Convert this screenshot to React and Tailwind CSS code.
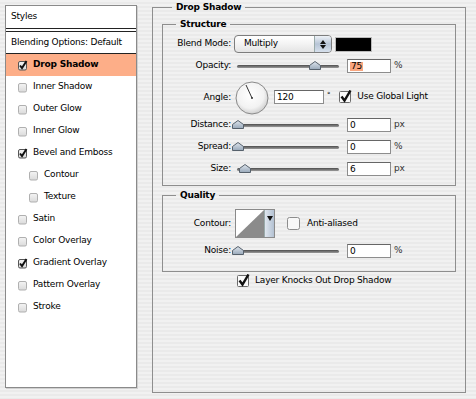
const stripes =
  'bg-[repeating-linear-gradient(180deg,#f1f1f1_0px,#f1f1f1_2px,#eaeaea_2px,#eaeaea_4px)]'

function SmallCheck({ checked }) {
  return (
    <svg width="11" height="11" viewBox="0 0 11 11" className="shrink-0">
      <defs>
        <linearGradient id="cbg" x1="0" y1="0" x2="0" y2="1">
          <stop offset="0" stopColor="#f4f4f4" />
          <stop offset="1" stopColor="#dadada" />
        </linearGradient>
      </defs>
      <rect x="1.5" y="1.5" width="8" height="8.5" rx="1.5" fill="url(#cbg)" stroke={checked ? '#555' : '#b0b0b0'} />
      {checked && <path d="M3 5.5 L5 8 L9.5 1" fill="none" stroke="#111" strokeWidth="2" />}
    </svg>
  )
}

function BigCheck({ checked }) {
  return (
    <svg width="14" height="14" viewBox="0 0 14 14" className="shrink-0">
      <rect x="0.5" y="1.5" width="11" height="11" rx="1" fill="#fafafa" stroke="#6b6b6b" />
      {checked && <path d="M2.5 6.5 L5.5 10.5 L11.5 0.5" fill="none" stroke="#111" strokeWidth="2.4" />}
    </svg>
  )
}

function StyleRow({ label, checked, bold, selected, indent }) {
  return (
    <div className={`h-[22px] flex items-center gap-[5px] ${indent ? 'pl-[22px]' : 'pl-[11px]'} ${selected ? 'bg-[#fdae88]' : ''}`}>
      <SmallCheck checked={checked} />
      <span className={bold ? 'font-bold' : ''}>{label}</span>
    </div>
  )
}

function Thumb() {
  return (
    <svg width="12" height="9" viewBox="0 0 12 9" className="absolute top-[-4px]">
      <defs>
        <linearGradient id="thg" x1="0" y1="0" x2="0" y2="1">
          <stop offset="0" stopColor="#dfe6ee" />
          <stop offset="1" stopColor="#98a8b9" />
        </linearGradient>
      </defs>
      <path d="M0.5 8.5 L0.5 4.5 L6 0.5 L11.5 4.5 L11.5 8.5 Z" fill="url(#thg)" stroke="#56616c" />
    </svg>
  )
}

function Slider({ pos }) {
  return (
    <div className="w-[108px] h-full flex items-center pl-[2px]">
      <div className="relative w-[102px] h-[3px] rounded-full bg-[linear-gradient(180deg,#4d4d4d,#9a9a9a)]">
        <div className="absolute" style={{ left: pos - 6 }}>
          <Thumb />
        </div>
      </div>
    </div>
  )
}

function Field({ value, w = 'w-[44px]', hl }) {
  return (
    <div className={`${w} h-[14px] bg-white border border-[#8d8d8d] border-t-[#666] flex items-center pl-[2px] leading-none`}>
      {hl ? <span className="bg-[#f9a67f] px-[1px]">{value}</span> : value}
    </div>
  )
}

function SliderRow({ label, pos, value, unit, mt, hl }) {
  return (
    <div className={`flex items-center h-[14px] ${mt}`}>
      <div className="w-[68px] text-right">{label}</div>
      <div className="ml-[4px] h-full">
        <Slider pos={pos} />
      </div>
      <div className="ml-[4px]">
        <Field value={value} hl={hl} />
      </div>
      <div className="ml-[3px] text-[#333]">{unit}</div>
    </div>
  )
}

function Dial() {
  return (
    <svg width="34" height="34" viewBox="0 0 34 34" className="shrink-0">
      <defs>
        <radialGradient id="dg" cx="0.45" cy="0.4" r="0.6">
          <stop offset="0" stopColor="#ffffff" />
          <stop offset="0.7" stopColor="#f2f2f2" />
          <stop offset="1" stopColor="#cfcfcf" />
        </radialGradient>
      </defs>
      <circle cx="17" cy="17" r="16" fill="url(#dg)" stroke="#8a8a8a" />
      <line x1="17" y1="17" x2="11" y2="4" stroke="#333" strokeWidth="1" />
      <circle cx="17" cy="17" r="1" fill="#333" />
    </svg>
  )
}

export default function App() {
  const styles = [
    { label: 'Inner Shadow' },
    { label: 'Outer Glow' },
    { label: 'Inner Glow' },
    { label: 'Bevel and Emboss', checked: true },
    { label: 'Contour', indent: true },
    { label: 'Texture', indent: true },
    { label: 'Satin' },
    { label: 'Color Overlay' },
    { label: 'Gradient Overlay', checked: true },
    { label: 'Pattern Overlay' },
    { label: 'Stroke' },
  ]

  return (
    <div className={`w-[476px] h-[399px] overflow-hidden flex items-start ${stripes} font-['DejaVu_Sans',sans-serif] text-[9px] tracking-[-0.2px] text-black`}>
      {/* Left: style list */}
      <div className="ml-[5px] mt-[5px] w-[132px] h-[383px] bg-white border border-[#8a8a8a] shadow-[1px_1px_0_#d0d0d0]">
        <div className="h-[23px] flex items-center pl-[5px] border-b border-[#222]">Styles</div>
        <div className="h-[2px]" />
        <div className="h-[23px] flex items-center pl-[5px] border-t border-b border-[#222]">Blending Options: Default</div>
        <StyleRow label="Drop Shadow" checked bold selected />
        {styles.map((s) => (
          <StyleRow key={s.label} {...s} />
        ))}
      </div>

      {/* Right: settings */}
      <fieldset className="ml-[15px] mt-[1px] w-[313px] h-[392px] border border-[#8e8e8e] px-[9px]">
        <legend className="ml-[10px] px-[4px] font-bold leading-[12px]">Drop Shadow</legend>

        <fieldset className="mt-[5px] w-[294px] border border-[#8e8e8e] pb-[9px]">
          <legend className="ml-[13px] px-[4px] font-bold leading-[12px]">Structure</legend>

          <div className="mt-[5px] h-[18px] flex items-center">
            <div className="w-[68px] text-right">Blend Mode:</div>
            <div className="ml-[3px] w-[98px] h-[18px] rounded-[4px] border border-[#7d7d7d] bg-[linear-gradient(180deg,#ffffff,#f3f3f3_50%,#e4e4e4)] flex items-center overflow-hidden">
              <span className="pl-[9px] flex-1">Multiply</span>
              <div className="w-[17px] h-full border-l border-[#9aa] bg-[linear-gradient(180deg,#eef2f7,#b7c5d6_50%,#d6e0ec)] flex flex-col items-center justify-center gap-[1px]">
                <svg width="6" height="4" viewBox="0 0 6 4"><path d="M0 4 L3 0 L6 4 Z" fill="#111" /></svg>
                <svg width="6" height="4" viewBox="0 0 6 4"><path d="M0 0 L3 4 L6 0 Z" fill="#111" /></svg>
              </div>
            </div>
            <div className="ml-[3px] w-[37px] h-[15px] bg-black border border-[#bbb]" />
          </div>

          <SliderRow label="Opacity:" pos={78} value="75" unit="%" mt="mt-[6px]" hl />

          <div className="mt-[8px] h-[34px] flex items-center">
            <div className="w-[68px] text-right">Angle:</div>
            <div className="ml-[4px]">
              <Dial />
            </div>
            <div className="ml-[5px] -mt-[2px]">
              <Field value="120" w="w-[50px]" />
            </div>
            <div className="ml-[3px] self-start mt-[9px] text-[7px]">°</div>
            <div className="ml-[9px] -mt-[2px] flex items-center gap-[4px]">
              <BigCheck checked />
              <span>Use Global Light</span>
            </div>
          </div>

          <SliderRow label="Distance:" pos={1} value="0" unit="px" mt="mt-[3px]" />
          <SliderRow label="Spread:" pos={1} value="0" unit="%" mt="mt-[8px]" />
          <SliderRow label="Size:" pos={8} value="6" unit="px" mt="mt-[8px]" />
        </fieldset>

        <fieldset className="mt-[3px] w-[294px] border border-[#8e8e8e] pb-[13px]">
          <legend className="ml-[13px] px-[4px] font-bold leading-[12px]">Quality</legend>

          <div className="mt-[8px] h-[29px] flex items-center">
            <div className="w-[68px] text-right">Contour:</div>
            <div className="ml-[4px] w-[40px] h-[29px] border border-[#8a8a8a] flex bg-white">
              <svg width="28" height="27" viewBox="0 0 28 27" className="shrink-0">
                <path d="M28 0 L0 27 L28 27 Z" fill="#8b8b8b" />
              </svg>
              <div className="flex-1 border-l border-[#9aa] bg-[linear-gradient(90deg,#dfe6ef,#b3c1d2)] flex justify-center pt-[6px]">
                <svg width="6" height="5" viewBox="0 0 6 5"><path d="M0 0 L3 5 L6 0 Z" fill="#111" /></svg>
              </div>
            </div>
            <div className="ml-[12px] flex items-center gap-[7px]">
              <svg width="13" height="13" viewBox="0 0 13 13" className="shrink-0">
                <rect x="0.5" y="0.5" width="12" height="12" rx="2" fill="#f8f8f8" stroke="#8d8d8d" />
              </svg>
              <span>Anti-aliased</span>
            </div>
          </div>

          <SliderRow label="Noise:" pos={1} value="0" unit="%" mt="mt-[6px]" />
        </fieldset>

        <div className="mt-[2px] ml-[75px] flex items-center gap-[4px]">
          <BigCheck checked />
          <span>Layer Knocks Out Drop Shadow</span>
        </div>
      </fieldset>
    </div>
  )
}
